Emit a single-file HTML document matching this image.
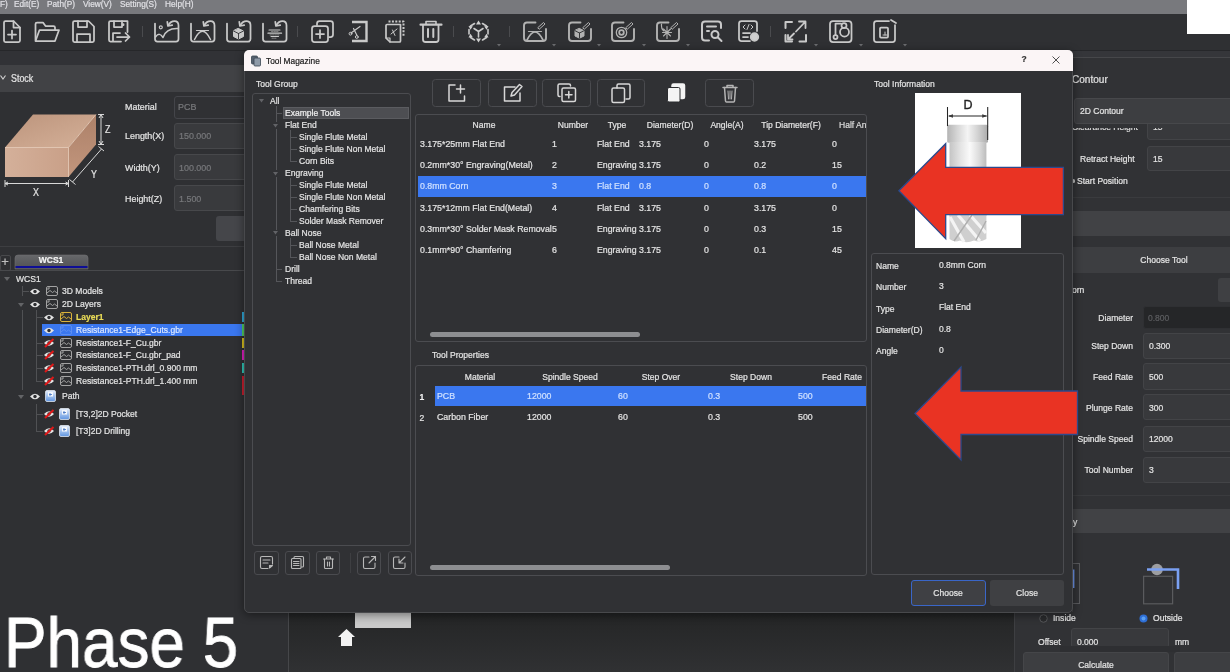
<!DOCTYPE html>
<html><head><meta charset="utf-8"><title>Tool Magazine</title>
<style>
html,body{margin:0;padding:0;}
body{width:1230px;height:672px;overflow:hidden;background:#2d2e31;font-family:"Liberation Sans",sans-serif;position:relative;}
#app{position:absolute;left:0;top:0;width:1230px;height:672px;overflow:visible;will-change:transform;filter:blur(0.45px);}
.b{position:absolute;}
.t{position:absolute;white-space:nowrap;-webkit-text-stroke:0.22px currentColor;}
svg{overflow:visible;}
</style></head><body><div id="app">
<div class="b" style="left:-5.0px;top:-5.0px;width:1240.0px;height:682.0px;background:#2f3033;"></div>
<div class="b" style="left:289px;top:50px;width:726px;height:622px;background:linear-gradient(#1f2021 0%,#222324 90.5%,#262728 92%,#303133 100%)"></div>
<div class="b" style="left:287.5px;top:50.0px;width:1.5px;height:622.0px;background:#46474a;"></div>
<div class="b" style="left:355.0px;top:612.0px;width:56.0px;height:16.0px;background:#c9c9c9;"></div>
<svg class="b" style="left:338.0px;top:629.0px;" width="17" height="18" viewBox="0 0 17 18"><path d="M8.5 0 L17 8 H14 V17 H3 V8 H0 Z" fill="#f2f2f2"/></svg>
<div class="b" style="left:-5.0px;top:-5.0px;width:1240.0px;height:18.5px;background:#78797d;"></div>
<div class="t" style="top:-3.0px;line-height:14px;font-size:9.3px;color:#e0e0e4;left:0.0px;transform:scaleX(0.89);transform-origin:0 50%;">F)</div>
<div class="t" style="top:-3.0px;line-height:14px;font-size:9.3px;color:#e0e0e4;left:14.4px;transform:scaleX(0.89);transform-origin:0 50%;">Edit(E)</div>
<div class="t" style="top:-3.0px;line-height:14px;font-size:9.3px;color:#e0e0e4;left:46.8px;transform:scaleX(0.89);transform-origin:0 50%;">Path(P)</div>
<div class="t" style="top:-3.0px;line-height:14px;font-size:9.3px;color:#e0e0e4;left:82.8px;transform:scaleX(0.89);transform-origin:0 50%;">View(V)</div>
<div class="t" style="top:-3.0px;line-height:14px;font-size:9.3px;color:#e0e0e4;left:119.7px;transform:scaleX(0.89);transform-origin:0 50%;">Setting(S)</div>
<div class="t" style="top:-3.0px;line-height:14px;font-size:9.3px;color:#e0e0e4;left:165.0px;transform:scaleX(0.89);transform-origin:0 50%;">Help(H)</div>
<div class="b" style="left:1187.0px;top:-5.0px;width:48.0px;height:38.5px;background:#ffffff;"></div>
<div class="b" style="left:0.0px;top:13.5px;width:1187.0px;height:37.0px;background:#2f3033;"></div>
<div class="b" style="left:1187.0px;top:33.5px;width:43.0px;height:17.0px;background:#2f3033;"></div>
<div class="b" style="left:0.0px;top:49.5px;width:1230.0px;height:1.2px;background:#26272a;"></div>
<svg class="b" style="left:2.5px;top:20.0px;" width="18" height="23" viewBox="0 0 18 23"><g fill="none" stroke="#c9c9c9" stroke-width="1.75" stroke-linecap="round" stroke-linejoin="round"><path d="M2.5 1 H10.5 L17 7.5 V20.5 Q17 22 15.5 22 H2.5 Q1 22 1 20.5 V2.5 Q1 1 2.5 1 Z"/><path d="M10.5 1 V7.5 H17"/><path d="M9 10.5 V18.5 M5 14.5 H13"/></g></svg>
<svg class="b" style="left:34.0px;top:20.0px;" width="26" height="23" viewBox="0 0 26 23"><g fill="none" stroke="#c9c9c9" stroke-width="1.75" stroke-linecap="round" stroke-linejoin="round"><path d="M1.5 20 V4 Q1.5 2.5 3 2.5 H9 L11.5 6 H19.5 Q21 6 21 7.5 V10"/><path d="M1.5 21 L5.5 10 H25 L21 21 Z"/></g></svg>
<svg class="b" style="left:72.0px;top:20.0px;" width="23" height="23" viewBox="0 0 23 23"><g fill="none" stroke="#c9c9c9" stroke-width="1.75" stroke-linecap="round" stroke-linejoin="round"><path d="M2.5 1 H16.5 L22 6.5 V20.5 Q22 22 20.5 22 H2.5 Q1 22 1 20.5 V2.5 Q1 1 2.5 1 Z"/><path d="M6 1 V7 H15 V1"/><path d="M5 22 V14 H18 V22"/></g></svg>
<svg class="b" style="left:108.0px;top:20.0px;" width="23" height="23" viewBox="0 0 23 23"><g fill="none" stroke="#c9c9c9" stroke-width="1.75" stroke-linecap="round" stroke-linejoin="round"><path d="M13 21.5 H2.5 Q1 21.5 1 20 V2.5 Q1 1 2.5 1 H19.5 V12"/><path d="M6 1 V7 H14 V1 M15.5 4 V5"/><path d="M5 21 V13 H12"/><path d="M9 17 H21.5 M17.5 13 L21.5 17 L17.5 21"/></g></svg>
<div class="b" style="left:141.5px;top:26.0px;width:1.0px;height:11.0px;background:#4a4b4e;"></div>
<svg class="b" style="left:154.0px;top:20.0px;" width="26" height="23" viewBox="0 0 26 23"><g fill="none" stroke="#c9c9c9" stroke-width="1.75" stroke-linecap="round" stroke-linejoin="round"><path d="M1 3.500 V19 Q1 21.500 3.500 21.500 H22 Q24.500 21.500 24.500 19 V5.500 Q24.500 1 20.500 1 Q16.500 1 14.500 5"/><path d="M13.300 1.800 L13.900 6 L18.200 5.200"/><path d="M1.500 17 Q5.500 11.500 9 17.500 Q12 8 24 8.500" stroke-width="1.5"/><circle cx="6.800" cy="7.300" r="1.500" stroke-width="1.2"/></g></svg>
<svg class="b" style="left:190.0px;top:20.0px;" width="26" height="23" viewBox="0 0 26 23"><g fill="none" stroke="#c9c9c9" stroke-width="1.75" stroke-linecap="round" stroke-linejoin="round"><path d="M1 3.500 V19 Q1 21.500 3.500 21.500 H22 Q24.500 21.500 24.500 19 V5.500 Q24.500 1 20.500 1 Q16.500 1 14.500 5"/><path d="M13.300 1.800 L13.900 6 L18.200 5.200"/><path d="M4.500 19.500 Q12.500 3 20.500 19.500" stroke-width="1.5"/><path d="M6.500 10.500 H18.500" stroke-width="1.2"/></g></svg>
<svg class="b" style="left:226.0px;top:20.0px;" width="26" height="23" viewBox="0 0 26 23"><g fill="none" stroke="#c9c9c9" stroke-width="1.75" stroke-linecap="round" stroke-linejoin="round"><path d="M1 3.500 V19 Q1 21.500 3.500 21.500 H22 Q24.500 21.500 24.500 19 V5.500 Q24.500 1 20.500 1 Q16.500 1 14.500 5"/><path d="M13.300 1.800 L13.900 6 L18.200 5.200"/><path d="M12.500 8.500 L17.500 11 V16.500 L12.500 19 L7.500 16.500 V11 Z" fill="#c9c9c9" stroke-width="1"/><path d="M7.500 11 L12.500 13.500 L17.500 11 M12.500 13.500 V19" stroke="#2f3033" stroke-width="0.900"/></g></svg>
<svg class="b" style="left:262.0px;top:20.0px;" width="26" height="23" viewBox="0 0 26 23"><g fill="none" stroke="#c9c9c9" stroke-width="1.75" stroke-linecap="round" stroke-linejoin="round"><path d="M1 3.500 V19 Q1 21.500 3.500 21.500 H22 Q24.500 21.500 24.500 19 V5.500 Q24.500 1 20.500 1 Q16.500 1 14.500 5"/><path d="M13.300 1.800 L13.900 6 L18.200 5.200"/><path d="M7 10 H18 M9 16.500 H16.500" stroke-width="1.100"/><path d="M6 13.200 H19.500" stroke-width="1.300"/><path d="M9.500 11.600 H16 M8 14.900 H17.500 M10 18.200 H15" stroke-width="0.800" stroke-dasharray="1.500 1" stroke="#9a9a9a"/></g></svg>
<div class="b" style="left:297.0px;top:26.0px;width:1.0px;height:11.0px;background:#4a4b4e;"></div>
<svg class="b" style="left:310.5px;top:20.0px;" width="23" height="23" viewBox="0 0 23 23"><g fill="none" stroke="#c9c9c9" stroke-width="1.75" stroke-linecap="round" stroke-linejoin="round"><path d="M6 5 V3.500 Q6 1 8.500 1 H19.500 Q22 1 22 3.500 V14.500 Q22 17 19.500 17 H18"/><rect x="1" y="6" width="16" height="16" rx="2.5"/><path d="M9 10 V18 M5 14 H13"/></g></svg>
<svg class="b" style="left:348.0px;top:20.0px;" width="20" height="23" viewBox="0 0 20 23"><g fill="none" stroke="#c9c9c9" stroke-width="1.75" stroke-linecap="round" stroke-linejoin="round"><path d="M4 2 H18.500 V21 H4" stroke-width="2.400" stroke-linejoin="miter" stroke-linecap="butt"/><path d="M3 13 L12 6.500 M5.500 8.500 L9 15.500" stroke-width="1.2"/><circle cx="2.500" cy="13.700" r="1.400" stroke-width="1"/><circle cx="8.800" cy="17" r="1.400" stroke-width="1"/></g></svg>
<svg class="b" style="left:385.0px;top:20.0px;" width="20" height="23" viewBox="0 0 20 23"><g fill="none" stroke="#c9c9c9" stroke-width="1.75" stroke-linecap="round" stroke-linejoin="round"><path d="M3.500 1.500 H18.500 V17" stroke-dasharray="2 1.400" stroke-width="2" stroke-linecap="butt"/><path d="M15.500 4.500 V21 Q15.500 22 14.500 22 H5 L1 18 V5.500 Q1 4.500 2 4.500 Z" stroke-width="1.700"/><path d="M1 18 H5 V22" stroke-width="1.2"/><path d="M6 14 L12 9 M7.500 10 L10 15.500" stroke-width="1"/></g></svg>
<svg class="b" style="left:419.5px;top:20.0px;" width="22" height="23" viewBox="0 0 22 23"><g fill="none" stroke="#c9c9c9" stroke-width="1.75" stroke-linecap="round" stroke-linejoin="round"><path d="M0.500 4.700 H21.500" stroke-width="2.200"/><path d="M6 4 V1.500 H16 V4" stroke-width="1.600"/><path d="M3 5 V19.500 Q3 22 5.500 22 H16 Q18.500 22 18.500 19.500 V5" stroke-width="1.800"/><path d="M8 9 V17 M13.300 9 V17" stroke-width="2"/></g></svg>
<div class="b" style="left:452.5px;top:26.0px;width:1.0px;height:11.0px;background:#4a4b4e;"></div>
<svg class="b" style="left:468.0px;top:20.0px;" width="21" height="23" viewBox="0 0 21 23"><g fill="none" stroke="#c9c9c9" stroke-width="1.75" stroke-linecap="round" stroke-linejoin="round"><path d="M10.500 11.500 V17 M10.500 11.500 L6 8.500 M10.500 11.500 L15 8.500" stroke-width="1.600"/><path d="M6.500 3.500 L2.500 6 M14.500 3.500 L18.500 6 M1 9.500 V14 M20 9.500 V14 M2.500 17.500 L6.500 20 M18.500 17.500 L14.500 20" stroke-width="1.600"/><path d="M10.500 0.500 L13 4.500 H8 Z M10.500 22.500 L13 18.500 H8 Z M0.500 6 L4.800 6.200 L2.500 9.800 Z M20.500 6 L16.200 6.200 L18.500 9.800 Z M0.500 17.500 L4.800 17.300 L2.500 13.700 Z M20.500 17.500 L16.200 17.300 L18.500 13.700 Z" fill="#cfcfcf" stroke="none"/></g></svg>
<svg class="b" style="left:496.7px;top:44.3px;" width="4" height="2.5" viewBox="0 0 4 2.5"><path d="M0 0 H4 L2 2.500 Z" fill="#6c6d70"/></svg>
<div class="b" style="left:509.0px;top:26.0px;width:1.0px;height:11.0px;background:#4a4b4e;"></div>
<svg class="b" style="left:522.6px;top:20.0px;" width="24" height="23" viewBox="0 0 24 23"><g fill="none" stroke="#b2b2b2" stroke-width="1.75" stroke-linecap="round" stroke-linejoin="round"><path d="M12.500 2.500 H4 Q1 2.500 1 5.500 V18 Q1 21 4 21 H20 Q23 21 23 18 V9" stroke-width="1.900"/><path d="M15 7.500 L20.500 2.500 L22 4 L16.500 9 Z" stroke-width="1"/><path d="M4 20 Q12 4 20 20" stroke-width="1.700"/><path d="M5.500 11.500 H18.500" stroke-width="1.200"/></g></svg>
<svg class="b" style="left:552.0px;top:44.3px;" width="4" height="2.5" viewBox="0 0 4 2.5"><path d="M0 0 H4 L2 2.500 Z" fill="#6c6d70"/></svg>
<svg class="b" style="left:567.6px;top:20.0px;" width="24" height="23" viewBox="0 0 24 23"><g fill="none" stroke="#b2b2b2" stroke-width="1.75" stroke-linecap="round" stroke-linejoin="round"><path d="M12.500 2.500 H4 Q1 2.500 1 5.500 V18 Q1 21 4 21 H20 Q23 21 23 18 V9" stroke-width="1.900"/><path d="M15 7.500 L20.500 2.500 L22 4 L16.500 9 Z" stroke-width="1"/><path d="M11.500 8.500 L16 10.700 V16 L11.500 18.200 L7 16 V10.700 Z" fill="#b2b2b2" stroke-width="1"/><path d="M7 10.700 L11.500 13 L16 10.700 M11.500 13 V18.200" stroke="#2a2b2e" stroke-width="0.900"/></g></svg>
<svg class="b" style="left:596.7px;top:44.3px;" width="4" height="2.5" viewBox="0 0 4 2.5"><path d="M0 0 H4 L2 2.500 Z" fill="#6c6d70"/></svg>
<svg class="b" style="left:610.8px;top:20.0px;" width="24" height="23" viewBox="0 0 24 23"><g fill="none" stroke="#b2b2b2" stroke-width="1.75" stroke-linecap="round" stroke-linejoin="round"><path d="M12.500 2.500 H4 Q1 2.500 1 5.500 V18 Q1 21 4 21 H20 Q23 21 23 18 V9" stroke-width="1.900"/><path d="M15 7.500 L20.500 2.500 L22 4 L16.500 9 Z" stroke-width="1"/><circle cx="10.500" cy="12.500" r="5.200" stroke-width="1.300"/><circle cx="10.500" cy="12.500" r="2.300" stroke-width="1.800"/></g></svg>
<svg class="b" style="left:641.5px;top:44.3px;" width="4" height="2.5" viewBox="0 0 4 2.5"><path d="M0 0 H4 L2 2.500 Z" fill="#6c6d70"/></svg>
<svg class="b" style="left:655.8px;top:20.0px;" width="24" height="23" viewBox="0 0 24 23"><g fill="none" stroke="#b2b2b2" stroke-width="1.75" stroke-linecap="round" stroke-linejoin="round"><path d="M12.500 2.500 H4 Q1 2.500 1 5.500 V18 Q1 21 4 21 H20 Q23 21 23 18 V9" stroke-width="1.900"/><path d="M15 7.500 L20.500 2.500 L22 4 L16.500 9 Z" stroke-width="1"/><path d="M5.500 4 Q5 9 8 11" stroke-width="1.200"/><path d="M11 6.500 V18.500 M6.500 12.500 H15.500 M7.500 9 L14.500 16 M14.500 9 L7.500 16" stroke-width="1.100"/></g></svg>
<svg class="b" style="left:686.0px;top:44.3px;" width="4" height="2.5" viewBox="0 0 4 2.5"><path d="M0 0 H4 L2 2.500 Z" fill="#6c6d70"/></svg>
<svg class="b" style="left:700.8px;top:20.0px;" width="22" height="23" viewBox="0 0 22 23"><g fill="none" stroke="#c9c9c9" stroke-width="1.75" stroke-linecap="round" stroke-linejoin="round"><path d="M8 20.500 H4 Q1 20.500 1 17.500 V4.500 Q1 1.500 4 1.500 H17 Q20 1.500 20 4.500 V8" stroke-width="2"/><path d="M6 6.500 H15 M6 11 H8" stroke-width="2"/><circle cx="14" cy="14.500" r="3.500" stroke-width="2"/><path d="M17 17.500 L20.500 21" stroke-width="2"/></g></svg>
<svg class="b" style="left:737.5px;top:20.0px;" width="21" height="23" viewBox="0 0 21 23"><g fill="none" stroke="#c9c9c9" stroke-width="1.75" stroke-linecap="round" stroke-linejoin="round"><path d="M12 21 H3.500 Q1 21 1 18.500 V3.500 Q1 1 3.500 1 H16.500 Q19 1 19 3.500 V11"/><path d="M7 5 L5 7 L7 9 M13 5 L15 7 L13 9 M11 4.500 L9 9.500" stroke-width="1"/><path d="M5 13 H12 M5 17 H10"/><circle cx="16.500" cy="17" r="3.800" fill="#cfcfcf"/></g></svg>
<div class="b" style="left:769.5px;top:26.0px;width:1.0px;height:11.0px;background:#4a4b4e;"></div>
<svg class="b" style="left:784.0px;top:20.0px;" width="23" height="23" viewBox="0 0 23 23"><g fill="none" stroke="#c9c9c9" stroke-width="1.75" stroke-linecap="round" stroke-linejoin="round"><path d="M1.500 8 V2 H8 M1.500 15 V21.500 H8 M22 15 V21.500 H15.500" stroke-width="2"/><path d="M12 11.500 L21.500 1.500 M15 1.500 H21.500 V8" stroke-width="1.8"/><path d="M10 13.500 L4 19.500 M4 15 V19.500 H8.500" stroke-width="1.8"/></g></svg>
<svg class="b" style="left:814.0px;top:44.3px;" width="4" height="2.5" viewBox="0 0 4 2.5"><path d="M0 0 H4 L2 2.500 Z" fill="#6c6d70"/></svg>
<svg class="b" style="left:828.6px;top:20.0px;" width="23" height="23" viewBox="0 0 23 23"><g fill="none" stroke="#c9c9c9" stroke-width="1.75" stroke-linecap="round" stroke-linejoin="round"><rect x="1" y="1" width="21.500" height="21" rx="3"/><circle cx="6.500" cy="17" r="2"/><circle cx="15.500" cy="12" r="4.500"/><circle cx="15" cy="5.500" r="2.500"/><path d="M6.500 15 V3.500 H12"/></g></svg>
<svg class="b" style="left:858.8px;top:44.3px;" width="4" height="2.5" viewBox="0 0 4 2.5"><path d="M0 0 H4 L2 2.500 Z" fill="#6c6d70"/></svg>
<svg class="b" style="left:873.0px;top:20.0px;" width="23" height="23" viewBox="0 0 23 23"><g fill="none" stroke="#c9c9c9" stroke-width="1.75" stroke-linecap="round" stroke-linejoin="round"><path d="M16 1 H3.500 Q1 1 1 3.500 V19.500 Q1 22 3.500 22 H19.500 Q22 22 22 19.500 V5"/><path d="M18 0 L23 3"/><rect x="7" y="7.500" width="8" height="10" rx="1"/><path d="M12 12 V15 M10 15 H14" stroke-width="1"/></g></svg>
<svg class="b" style="left:903.0px;top:44.3px;" width="4" height="2.5" viewBox="0 0 4 2.5"><path d="M0 0 H4 L2 2.500 Z" fill="#6c6d70"/></svg>
<div class="b" style="left:0.0px;top:51.0px;width:288.0px;height:14.0px;background:#313236;"></div>
<div class="b" style="left:0.0px;top:65.0px;width:288.0px;height:26.5px;background:#414245;"></div>
<svg class="b" style="left:0.0px;top:75.0px;" width="6" height="5" viewBox="0 0 6 5"><path d="M0.5 0.5 L3 4 L5.5 0.500" fill="none" stroke="#d0d0d0" stroke-width="1.1"/></svg>
<div class="t" style="top:72.1px;line-height:14px;font-size:10px;color:#e4e4e4;left:11.0px;transform:scaleX(0.89);transform-origin:0 50%;">Stock</div>
<svg class="b" style="left:0.0px;top:105.0px;" width="125" height="100" viewBox="0 0 125 100">
<defs>
<linearGradient id="gt" x1="0" y1="0" x2="1" y2="1"><stop offset="0" stop-color="#bc947c"/><stop offset="1" stop-color="#d5b199"/></linearGradient>
<linearGradient id="gf" x1="0" y1="0" x2="1" y2="0"><stop offset="0" stop-color="#d4b09a"/><stop offset="1" stop-color="#c9a088"/></linearGradient>
<linearGradient id="gr" x1="0" y1="0" x2="0" y2="1"><stop offset="0" stop-color="#ad8169"/><stop offset="1" stop-color="#c2967d"/></linearGradient>
</defs>
<polygon points="33,9.5 96,9.5 68.500,42.500 5,42.500" fill="url(#gt)"/>
<polygon points="5,42.500 68.500,42.500 68.500,72 5,72" fill="url(#gf)"/>
<polygon points="68.500,42.500 96,9.5 96,39.500 68.500,72" fill="url(#gr)"/>
<path d="M5 42.500 H68.500 V72 M68.500 42.500 L96 9.5" fill="none" stroke="#f0d4c0" stroke-width="0.8"/>
<g stroke="#d8d8d8" stroke-width="1" fill="none">
<path d="M101 9.5 V39.500 M98 9.5 H104 M98 39.500 H104 M99 13 L101 9.5 L103 13 M99 36 L101 39.500 L103 36"/>
<path d="M101.500 44 L72.500 77 M98.500 41.500 L104 46 M69.500 74.500 L75.500 79.500"/>
<path d="M5 78.500 H68.500 M5 75 V82 M68.500 75 V82 M8 77 L5 78.500 L8 80 M65.500 77 L68.500 78.500 L65.500 80"/>
</g></svg>
<div class="t" style="top:122.5px;line-height:14px;font-size:10px;color:#e4e4e4;left:104.5px;transform:scaleX(0.89);transform-origin:0 50%;">Z</div>
<div class="t" style="top:168.0px;line-height:14px;font-size:10px;color:#e4e4e4;left:90.5px;transform:scaleX(0.89);transform-origin:0 50%;">Y</div>
<div class="t" style="top:186.2px;line-height:14px;font-size:10px;color:#e4e4e4;left:33.3px;transform:scaleX(0.89);transform-origin:0 50%;">X</div>
<div class="t" style="top:100.3px;line-height:14px;font-size:9.6px;color:#e4e4e4;left:124.6px;transform:scaleX(0.93);transform-origin:0 50%;">Material</div>
<div class="b" style="left:174.0px;top:96.0px;width:120.0px;height:22.7px;background:#303134;border:1px solid #44454a;box-sizing:border-box;border-radius:3px;"></div>
<div class="t" style="top:100.3px;line-height:14px;font-size:9.6px;color:#77787b;left:178.0px;transform:scaleX(0.93);transform-origin:0 50%;">PCB</div>
<div class="t" style="top:129.0px;line-height:14px;font-size:9.6px;color:#e4e4e4;left:124.6px;transform:scaleX(0.93);transform-origin:0 50%;">Length(X)</div>
<div class="b" style="left:174.0px;top:123.0px;width:120.0px;height:25.6px;background:#393a3d;border:1px solid #47484b;box-sizing:border-box;border-radius:3px;"></div>
<div class="t" style="top:129.0px;line-height:14px;font-size:9.6px;color:#77787b;left:179.3px;transform:scaleX(0.93);transform-origin:0 50%;">150.000</div>
<div class="t" style="top:160.6px;line-height:14px;font-size:9.6px;color:#e4e4e4;left:124.6px;transform:scaleX(0.93);transform-origin:0 50%;">Width(Y)</div>
<div class="b" style="left:174.0px;top:154.0px;width:120.0px;height:26.0px;background:#393a3d;border:1px solid #47484b;box-sizing:border-box;border-radius:3px;"></div>
<div class="t" style="top:160.6px;line-height:14px;font-size:9.6px;color:#77787b;left:179.3px;transform:scaleX(0.93);transform-origin:0 50%;">100.000</div>
<div class="t" style="top:191.5px;line-height:14px;font-size:9.6px;color:#e4e4e4;left:124.6px;transform:scaleX(0.93);transform-origin:0 50%;">Height(Z)</div>
<div class="b" style="left:174.0px;top:184.8px;width:120.0px;height:26.6px;background:#393a3d;border:1px solid #47484b;box-sizing:border-box;border-radius:3px;"></div>
<div class="t" style="top:191.5px;line-height:14px;font-size:9.6px;color:#77787b;left:179.3px;transform:scaleX(0.93);transform-origin:0 50%;">1.500</div>
<div class="b" style="left:216.4px;top:216.0px;width:80.0px;height:24.6px;background:#45464a;border-radius:3px;"></div>
<div class="b" style="left:0.0px;top:246.0px;width:288.0px;height:1.0px;background:#3d3e41;"></div>
<div class="b" style="left:0.0px;top:254.5px;width:10.5px;height:16.0px;background:#2e2f32;border:1px solid #48494c;box-sizing:border-box;border-radius:2px;"></div>
<div class="t" style="top:255.3px;line-height:14px;font-size:13px;color:#bdbdbd;left:-145.0px;width:300px;text-align:center;transform:scaleX(1);transform-origin:50% 50%;">+</div>
<svg class="b" style="left:15.0px;top:254.5px;" width="73" height="14" viewBox="0 0 73 14"><defs><linearGradient id="tg" x1="0" y1="0" x2="0" y2="1"><stop offset="0" stop-color="#66676a"/><stop offset="1" stop-color="#505154"/></linearGradient></defs>
<path d="M0 14 V3 Q0 0 3 0 H70 Q73 0 73 3 V14 Z" fill="url(#tg)" stroke="#707174" stroke-width="0.6"/><rect x="0.5" y="11" width="72" height="2" fill="#0e0e96"/></svg>
<div class="t" style="top:253.0px;line-height:14px;font-size:9.6px;color:#f4f4f4;font-weight:bold;left:-99.0px;width:300px;text-align:center;transform:scaleX(0.89);transform-origin:50% 50%;">WCS1</div>
<div class="b" style="left:0.0px;top:270.0px;width:244.0px;height:1.0px;background:#48494c;"></div>
<div class="b" style="left:21.5px;top:286.0px;width:1.0px;height:10.0px;background:#505154;"></div>
<div class="b" style="left:21.5px;top:291.0px;width:7.0px;height:1.0px;background:#505154;"></div>
<div class="b" style="left:21.5px;top:310.0px;width:1.0px;height:80.0px;background:#505154;"></div>
<div class="b" style="left:35.5px;top:310.0px;width:1.0px;height:71.0px;background:#505154;"></div>
<div class="b" style="left:35.5px;top:317.0px;width:7.0px;height:1.0px;background:#505154;"></div>
<div class="b" style="left:35.5px;top:342.8px;width:7.0px;height:1.0px;background:#505154;"></div>
<div class="b" style="left:35.5px;top:355.4px;width:7.0px;height:1.0px;background:#505154;"></div>
<div class="b" style="left:35.5px;top:368.0px;width:7.0px;height:1.0px;background:#505154;"></div>
<div class="b" style="left:35.5px;top:380.8px;width:7.0px;height:1.0px;background:#505154;"></div>
<div class="b" style="left:35.5px;top:404.0px;width:1.0px;height:27.5px;background:#505154;"></div>
<div class="b" style="left:35.5px;top:413.7px;width:7.0px;height:1.0px;background:#505154;"></div>
<div class="b" style="left:35.5px;top:431.4px;width:7.0px;height:1.0px;background:#505154;"></div>
<svg class="b" style="left:3.5px;top:277.2px;" width="6" height="4" viewBox="0 0 6 4"><path d="M0 0 H6 L3 4 Z" fill="#636467"/></svg>
<div class="t" style="top:271.7px;line-height:14px;font-size:9.6px;color:#e4e4e4;left:15.5px;transform:scaleX(0.89);transform-origin:0 50%;">WCS1</div>
<svg class="b" style="left:30.0px;top:287.5px;" width="10" height="7" viewBox="0 0 10 7"><path d="M0 3.500 Q5 -2 10 3.500 Q5 9 0 3.500 Z" fill="#e4e4e4"/><circle cx="5" cy="3.500" r="1.7" fill="#2e2f32"/></svg>
<svg class="b" style="left:45.5px;top:286.0px;" width="12" height="10" viewBox="0 0 12 10"><g fill="none" stroke="#a2a2a2" stroke-width="1"><rect x="0.5" y="0.500" width="11" height="9" rx="1.5"/><path d="M1 7 L4 4.500 L6.500 6.500 L8.500 5 L11 7"/><path d="M3 0.500 V3 H0.5"/></g></svg>
<div class="t" style="top:284.0px;line-height:14px;font-size:9.6px;color:#e4e4e4;left:61.5px;transform:scaleX(0.89);transform-origin:0 50%;">3D Models</div>
<svg class="b" style="left:18.0px;top:302.8px;" width="6" height="4" viewBox="0 0 6 4"><path d="M0 0 H6 L3 4 Z" fill="#636467"/></svg>
<svg class="b" style="left:30.0px;top:300.8px;" width="10" height="7" viewBox="0 0 10 7"><path d="M0 3.500 Q5 -2 10 3.500 Q5 9 0 3.500 Z" fill="#e4e4e4"/><circle cx="5" cy="3.500" r="1.7" fill="#2e2f32"/></svg>
<svg class="b" style="left:45.5px;top:299.3px;" width="12" height="10" viewBox="0 0 12 10"><g fill="none" stroke="#a2a2a2" stroke-width="1"><rect x="0.5" y="0.500" width="11" height="9" rx="1.5"/><path d="M1 7 L4 4.500 L6.500 6.500 L8.500 5 L11 7"/><path d="M3 0.500 V3 H0.5"/></g></svg>
<div class="t" style="top:297.3px;line-height:14px;font-size:9.6px;color:#e4e4e4;left:61.5px;transform:scaleX(0.89);transform-origin:0 50%;">2D Layers</div>
<svg class="b" style="left:44.0px;top:313.5px;" width="10" height="7" viewBox="0 0 10 7"><path d="M0 3.500 Q5 -2 10 3.500 Q5 9 0 3.500 Z" fill="#e4e4e4"/><circle cx="5" cy="3.500" r="1.7" fill="#2e2f32"/></svg>
<svg class="b" style="left:59.5px;top:312.0px;" width="12" height="10" viewBox="0 0 12 10"><g fill="none" stroke="#d9b23a" stroke-width="1"><rect x="0.5" y="0.500" width="11" height="9" rx="1.5"/><path d="M1 7 L4 4.500 L6.500 6.500 L8.500 5 L11 7"/><path d="M3 0.500 V3 H0.5"/></g></svg>
<div class="t" style="top:310.0px;line-height:14px;font-size:9.6px;color:#eadc58;font-weight:bold;left:75.7px;transform:scaleX(0.89);transform-origin:0 50%;">Layer1</div>
<div class="b" style="left:42.0px;top:323.8px;width:202.0px;height:12.4px;background:#3a77ef;"></div>
<svg class="b" style="left:44.0px;top:326.5px;" width="10" height="7" viewBox="0 0 10 7"><path d="M0 3.500 Q5 -2 10 3.500 Q5 9 0 3.500 Z" fill="#e4e4e4"/><circle cx="5" cy="3.500" r="1.7" fill="#2e2f32"/></svg>
<svg class="b" style="left:59.5px;top:325.0px;" width="12" height="10" viewBox="0 0 12 10"><g fill="none" stroke="#5c8ef0" stroke-width="1"><rect x="0.5" y="0.500" width="11" height="9" rx="1.5"/><path d="M1 7 L4 4.500 L6.500 6.500 L8.500 5 L11 7"/><path d="M3 0.500 V3 H0.5"/></g></svg>
<div class="t" style="top:323.0px;line-height:14px;font-size:9.6px;color:#dbe7ff;left:75.7px;transform:scaleX(0.89);transform-origin:0 50%;">Resistance1-Edge_Cuts.gbr</div>
<svg class="b" style="left:43.5px;top:338.8px;" width="10" height="8" viewBox="0 0 10 8"><path d="M0 4 Q5 -1.500 10 4 Q5 9.5 0 4 Z" fill="#e4e4e4"/><circle cx="5" cy="4" r="1.7" fill="#2e2f32"/><path d="M1 8 L9.5 0" stroke="#e01818" stroke-width="2"/></svg>
<svg class="b" style="left:59.5px;top:337.8px;" width="12" height="10" viewBox="0 0 12 10"><g fill="none" stroke="#a2a2a2" stroke-width="1"><rect x="0.5" y="0.500" width="11" height="9" rx="1.5"/><path d="M1 7 L4 4.500 L6.500 6.500 L8.500 5 L11 7"/><path d="M3 0.500 V3 H0.5"/></g></svg>
<div class="t" style="top:335.8px;line-height:14px;font-size:9.6px;color:#e4e4e4;left:75.7px;transform:scaleX(0.89);transform-origin:0 50%;">Resistance1-F_Cu.gbr</div>
<svg class="b" style="left:43.5px;top:351.4px;" width="10" height="8" viewBox="0 0 10 8"><path d="M0 4 Q5 -1.500 10 4 Q5 9.5 0 4 Z" fill="#e4e4e4"/><circle cx="5" cy="4" r="1.7" fill="#2e2f32"/><path d="M1 8 L9.5 0" stroke="#e01818" stroke-width="2"/></svg>
<svg class="b" style="left:59.5px;top:350.4px;" width="12" height="10" viewBox="0 0 12 10"><g fill="none" stroke="#a2a2a2" stroke-width="1"><rect x="0.5" y="0.500" width="11" height="9" rx="1.5"/><path d="M1 7 L4 4.500 L6.500 6.500 L8.500 5 L11 7"/><path d="M3 0.500 V3 H0.5"/></g></svg>
<div class="t" style="top:348.4px;line-height:14px;font-size:9.6px;color:#e4e4e4;left:75.7px;transform:scaleX(0.89);transform-origin:0 50%;">Resistance1-F_Cu.gbr_pad</div>
<svg class="b" style="left:43.5px;top:364.0px;" width="10" height="8" viewBox="0 0 10 8"><path d="M0 4 Q5 -1.500 10 4 Q5 9.5 0 4 Z" fill="#e4e4e4"/><circle cx="5" cy="4" r="1.7" fill="#2e2f32"/><path d="M1 8 L9.5 0" stroke="#e01818" stroke-width="2"/></svg>
<svg class="b" style="left:59.5px;top:363.0px;" width="12" height="10" viewBox="0 0 12 10"><g fill="none" stroke="#a2a2a2" stroke-width="1"><rect x="0.5" y="0.500" width="11" height="9" rx="1.5"/><path d="M1 7 L4 4.500 L6.500 6.500 L8.500 5 L11 7"/><path d="M3 0.500 V3 H0.5"/></g></svg>
<div class="t" style="top:361.0px;line-height:14px;font-size:9.6px;color:#e4e4e4;left:75.7px;transform:scaleX(0.89);transform-origin:0 50%;">Resistance1-PTH.drl_0.900 mm</div>
<svg class="b" style="left:43.5px;top:376.8px;" width="10" height="8" viewBox="0 0 10 8"><path d="M0 4 Q5 -1.500 10 4 Q5 9.5 0 4 Z" fill="#e4e4e4"/><circle cx="5" cy="4" r="1.7" fill="#2e2f32"/><path d="M1 8 L9.5 0" stroke="#e01818" stroke-width="2"/></svg>
<svg class="b" style="left:59.5px;top:375.8px;" width="12" height="10" viewBox="0 0 12 10"><g fill="none" stroke="#a2a2a2" stroke-width="1"><rect x="0.5" y="0.500" width="11" height="9" rx="1.5"/><path d="M1 7 L4 4.500 L6.500 6.500 L8.500 5 L11 7"/><path d="M3 0.500 V3 H0.5"/></g></svg>
<div class="t" style="top:373.8px;line-height:14px;font-size:9.6px;color:#e4e4e4;left:75.7px;transform:scaleX(0.89);transform-origin:0 50%;">Resistance1-PTH.drl_1.400 mm</div>
<svg class="b" style="left:18.0px;top:394.5px;" width="6" height="4" viewBox="0 0 6 4"><path d="M0 0 H6 L3 4 Z" fill="#636467"/></svg>
<svg class="b" style="left:30.0px;top:392.5px;" width="10" height="7" viewBox="0 0 10 7"><path d="M0 3.500 Q5 -2 10 3.500 Q5 9 0 3.500 Z" fill="#e4e4e4"/><circle cx="5" cy="3.500" r="1.7" fill="#2e2f32"/></svg>
<svg class="b" style="left:45.0px;top:390.0px;" width="11" height="12" viewBox="0 0 11 12"><defs><linearGradient id="dg" x1="0" y1="0" x2="0" y2="1"><stop offset="0" stop-color="#e8f0fc"/><stop offset="1" stop-color="#5e94e0"/></linearGradient></defs><rect x="0.5" y="0.500" width="10" height="11" rx="1.5" fill="url(#dg)" stroke="#dfe6f0" stroke-width="0.8"/><rect x="3" y="2" width="5" height="4.500" fill="#f4f7fc"/><path d="M5 3 V6 M4 4.500 H7" stroke="#3b6fc0" stroke-width="0.8"/></svg>
<div class="t" style="top:389.0px;line-height:14px;font-size:9.6px;color:#e4e4e4;left:61.5px;transform:scaleX(0.89);transform-origin:0 50%;">Path</div>
<svg class="b" style="left:43.5px;top:409.7px;" width="10" height="8" viewBox="0 0 10 8"><path d="M0 4 Q5 -1.500 10 4 Q5 9.5 0 4 Z" fill="#e4e4e4"/><circle cx="5" cy="4" r="1.7" fill="#2e2f32"/><path d="M1 8 L9.5 0" stroke="#e01818" stroke-width="2"/></svg>
<svg class="b" style="left:59.0px;top:407.7px;" width="11" height="12" viewBox="0 0 11 12"><defs><linearGradient id="dg" x1="0" y1="0" x2="0" y2="1"><stop offset="0" stop-color="#e8f0fc"/><stop offset="1" stop-color="#5e94e0"/></linearGradient></defs><rect x="0.5" y="0.500" width="10" height="11" rx="1.5" fill="url(#dg)" stroke="#dfe6f0" stroke-width="0.8"/><rect x="3" y="2" width="5" height="4.500" fill="#f4f7fc"/><path d="M5 3 V6 M4 4.500 H7" stroke="#3b6fc0" stroke-width="0.8"/></svg>
<div class="t" style="top:406.7px;line-height:14px;font-size:9.6px;color:#e4e4e4;left:75.7px;transform:scaleX(0.89);transform-origin:0 50%;">[T3,2]2D Pocket</div>
<svg class="b" style="left:43.5px;top:427.4px;" width="10" height="8" viewBox="0 0 10 8"><path d="M0 4 Q5 -1.500 10 4 Q5 9.5 0 4 Z" fill="#e4e4e4"/><circle cx="5" cy="4" r="1.7" fill="#2e2f32"/><path d="M1 8 L9.5 0" stroke="#e01818" stroke-width="2"/></svg>
<svg class="b" style="left:59.0px;top:425.4px;" width="11" height="12" viewBox="0 0 11 12"><defs><linearGradient id="dg" x1="0" y1="0" x2="0" y2="1"><stop offset="0" stop-color="#e8f0fc"/><stop offset="1" stop-color="#5e94e0"/></linearGradient></defs><rect x="0.5" y="0.500" width="10" height="11" rx="1.5" fill="url(#dg)" stroke="#dfe6f0" stroke-width="0.8"/><rect x="3" y="2" width="5" height="4.500" fill="#f4f7fc"/><path d="M5 3 V6 M4 4.500 H7" stroke="#3b6fc0" stroke-width="0.8"/></svg>
<div class="t" style="top:424.4px;line-height:14px;font-size:9.6px;color:#e4e4e4;left:75.7px;transform:scaleX(0.89);transform-origin:0 50%;">[T3]2D Drilling</div>
<div class="b" style="left:242.2px;top:312.0px;width:2.6px;height:10.0px;background:#2fa8d8;"></div>
<div class="b" style="left:242.2px;top:324.0px;width:2.6px;height:12.0px;background:#4fd060;"></div>
<div class="b" style="left:242.2px;top:338.0px;width:2.6px;height:10.0px;background:#d8c020;"></div>
<div class="b" style="left:242.2px;top:350.0px;width:2.6px;height:10.0px;background:#e020c0;"></div>
<div class="b" style="left:242.2px;top:363.0px;width:2.6px;height:10.0px;background:#30c8b8;"></div>
<div class="b" style="left:242.2px;top:376.0px;width:2.6px;height:19.0px;background:#c82030;"></div>
<div class="t" style="top:633.0px;line-height:14px;font-size:70.5px;color:#ffffff;left:4.0px;transform:scaleX(0.905);transform-origin:0 50%;line-height:80px;top:603px;-webkit-text-stroke:0.8px #fff;">Phase 5</div>
<div class="b" style="left:1015.0px;top:51.0px;width:215.0px;height:621.0px;background:#313235;"></div>
<div class="b" style="left:1072.0px;top:51.0px;width:158.0px;height:6.5px;background:#35363a;"></div>
<div class="b" style="left:1072.0px;top:57.0px;width:158.0px;height:1.0px;background:#46474a;"></div>
<div class="b" style="left:1014.0px;top:51.0px;width:1.0px;height:621.0px;background:#3e3f42;"></div>
<div class="b" style="left:1072.3px;top:71.0px;width:1.0px;height:541.0px;background:#3f4043;"></div>
<div class="t" style="top:72.3px;line-height:14px;font-size:11.3px;color:#e2e2e2;left:1072.2px;transform:scaleX(0.89);transform-origin:0 50%;">Contour</div>
<div class="b" style="left:1146.6px;top:113.0px;width:100.0px;height:26.8px;background:#38393c;border:1px solid #434447;box-sizing:border-box;border-radius:3px;"></div>
<div class="b" style="left:1074.3px;top:97.5px;width:170.0px;height:26.3px;background:#3d3e41;border:1px solid #47484b;box-sizing:border-box;border-radius:3px;"></div>
<div class="t" style="top:104.0px;line-height:14px;font-size:9.6px;color:#e4e4e4;left:1080.2px;transform:scaleX(0.89);transform-origin:0 50%;">2D Contour</div>
<div class="b" style="left:1072px;top:127.800px;width:158px;height:15px;overflow:hidden">
<div class="t" style="left:0px;top:-7.800px;line-height:14px;font-size:9.6px;color:#dedede;transform:scaleX(0.89);transform-origin:0 50%">Clearance Height</div>
<div class="t" style="left:81px;top:-7.800px;line-height:14px;font-size:9.6px;color:#dedede;transform:scaleX(0.89);transform-origin:0 50%">15</div>
</div>
<div class="t" style="top:152.0px;line-height:14px;font-size:9.6px;color:#e4e4e4;left:1080.0px;transform:scaleX(0.89);transform-origin:0 50%;">Retract Height</div>
<div class="b" style="left:1146.6px;top:145.7px;width:100.0px;height:25.5px;background:#38393c;border:1px solid #434447;box-sizing:border-box;border-radius:3px;"></div>
<div class="t" style="top:152.0px;line-height:14px;font-size:9.6px;color:#e4e4e4;left:1152.8px;transform:scaleX(0.89);transform-origin:0 50%;">15</div>
<div class="b" style="left:1071.5px;top:179.0px;width:3.0px;height:4.0px;background:#bdbdbd;border-radius:2px;"></div>
<div class="t" style="top:174.4px;line-height:14px;font-size:9.6px;color:#e4e4e4;left:1077.0px;transform:scaleX(0.89);transform-origin:0 50%;">Start Position</div>
<div class="b" style="left:1072.0px;top:196.5px;width:158.0px;height:1.0px;background:#3a3b3e;"></div>
<div class="b" style="left:1072.0px;top:211.4px;width:158.0px;height:24.6px;background:#414245;"></div>
<div class="b" style="left:1072.0px;top:247.4px;width:158.0px;height:25.5px;background:#3d3e41;"></div>
<div class="t" style="top:253.3px;line-height:14px;font-size:9.6px;color:#e4e4e4;left:1014.0px;width:300px;text-align:center;transform:scaleX(0.89);transform-origin:50% 50%;">Choose Tool</div>
<div class="t" style="top:283.3px;line-height:14px;font-size:9.6px;color:#e4e4e4;left:1072.0px;transform:scaleX(0.89);transform-origin:0 50%;">orn</div>
<div class="b" style="left:1217.7px;top:277.7px;width:20.0px;height:24.6px;background:#3f4043;border-radius:3px;"></div>
<div class="t" style="top:310.6px;line-height:14px;font-size:9.6px;color:#e4e4e4;left:833.3px;width:300px;text-align:right;transform:scaleX(0.89);transform-origin:100% 50%;">Diameter</div>
<div class="b" style="left:1143.2px;top:306.4px;width:100.0px;height:22.6px;background:#252628;border:1px solid #2f3033;box-sizing:border-box;border-radius:3px;"></div>
<div class="t" style="top:310.6px;line-height:14px;font-size:9.6px;color:#5d5e61;left:1147.5px;transform:scaleX(0.89);transform-origin:0 50%;">0.800</div>
<div class="t" style="top:339.0px;line-height:14px;font-size:9.6px;color:#e4e4e4;left:833.3px;width:300px;text-align:right;transform:scaleX(0.89);transform-origin:100% 50%;">Step Down</div>
<div class="b" style="left:1143.2px;top:332.6px;width:100.0px;height:26.0px;background:#38393c;border:1px solid #434447;box-sizing:border-box;border-radius:3px;"></div>
<div class="t" style="top:339.0px;line-height:14px;font-size:9.6px;color:#e4e4e4;left:1148.8px;transform:scaleX(0.89);transform-origin:0 50%;">0.300</div>
<div class="t" style="top:369.8px;line-height:14px;font-size:9.6px;color:#e4e4e4;left:833.3px;width:300px;text-align:right;transform:scaleX(0.89);transform-origin:100% 50%;">Feed Rate</div>
<div class="b" style="left:1143.2px;top:363.4px;width:100.0px;height:26.6px;background:#38393c;border:1px solid #434447;box-sizing:border-box;border-radius:3px;"></div>
<div class="t" style="top:369.8px;line-height:14px;font-size:9.6px;color:#e4e4e4;left:1148.8px;transform:scaleX(0.89);transform-origin:0 50%;">500</div>
<div class="t" style="top:401.0px;line-height:14px;font-size:9.6px;color:#e4e4e4;left:833.3px;width:300px;text-align:right;transform:scaleX(0.89);transform-origin:100% 50%;">Plunge Rate</div>
<div class="b" style="left:1143.2px;top:394.0px;width:100.0px;height:26.0px;background:#38393c;border:1px solid #434447;box-sizing:border-box;border-radius:3px;"></div>
<div class="t" style="top:401.0px;line-height:14px;font-size:9.6px;color:#e4e4e4;left:1148.8px;transform:scaleX(0.89);transform-origin:0 50%;">300</div>
<div class="t" style="top:432.4px;line-height:14px;font-size:9.6px;color:#e4e4e4;left:833.3px;width:300px;text-align:right;transform:scaleX(0.89);transform-origin:100% 50%;">Spindle Speed</div>
<div class="b" style="left:1143.2px;top:426.0px;width:100.0px;height:26.3px;background:#38393c;border:1px solid #434447;box-sizing:border-box;border-radius:3px;"></div>
<div class="t" style="top:432.4px;line-height:14px;font-size:9.6px;color:#e4e4e4;left:1148.8px;transform:scaleX(0.89);transform-origin:0 50%;">12000</div>
<div class="t" style="top:463.2px;line-height:14px;font-size:9.6px;color:#e4e4e4;left:833.3px;width:300px;text-align:right;transform:scaleX(0.89);transform-origin:100% 50%;">Tool Number</div>
<div class="b" style="left:1143.2px;top:456.8px;width:100.0px;height:26.2px;background:#38393c;border:1px solid #434447;box-sizing:border-box;border-radius:3px;"></div>
<div class="t" style="top:463.2px;line-height:14px;font-size:9.6px;color:#e4e4e4;left:1148.8px;transform:scaleX(0.89);transform-origin:0 50%;">3</div>
<div class="b" style="left:1072.0px;top:495.0px;width:158.0px;height:1.0px;background:#3a3b3e;"></div>
<div class="b" style="left:1072.0px;top:508.5px;width:158.0px;height:24.7px;background:#414245;"></div>
<div class="t" style="top:514.5px;line-height:14px;font-size:9.6px;color:#e4e4e4;left:1072.5px;transform:scaleX(0.89);transform-origin:0 50%;">y</div>
<svg class="b" style="left:1060.0px;top:560.0px;" width="30" height="48" viewBox="0 0 30 48"><rect x="2" y="3.500" width="17.500" height="40" fill="none" stroke="#5a5b5e" stroke-width="1"/><path d="M13.300 9.5 V28" stroke="#6f97ee" stroke-width="2.2"/></svg>
<svg class="b" style="left:1140.0px;top:560.0px;" width="45" height="48" viewBox="0 0 45 48"><rect x="3.600" y="16.300" width="29" height="27.500" fill="none" stroke="#5a5b5e" stroke-width="1.2"/><circle cx="17" cy="9.5" r="5.800" fill="#9d9ea1"/><path d="M7 9.5 H38 V29" fill="none" stroke="#7aa0f2" stroke-width="2.600"/></svg>
<svg class="b" style="left:1038.5px;top:613.7px;" width="9" height="9" viewBox="0 0 9 9"><circle cx="4.500" cy="4.500" r="3.800" fill="#2a2b2d" stroke="#57585b" stroke-width="1"/></svg>
<div class="t" style="top:611.2px;line-height:14px;font-size:9.6px;color:#e4e4e4;left:1052.6px;transform:scaleX(0.89);transform-origin:0 50%;">Inside</div>
<svg class="b" style="left:1139.0px;top:613.7px;" width="9" height="9" viewBox="0 0 9 9"><circle cx="4.500" cy="4.500" r="4" fill="#2f6fd6"/><circle cx="4.500" cy="4.500" r="2" fill="#5aa0f2"/></svg>
<div class="t" style="top:611.2px;line-height:14px;font-size:9.6px;color:#e4e4e4;left:1152.8px;transform:scaleX(0.89);transform-origin:0 50%;">Outside</div>
<div class="t" style="top:634.8px;line-height:14px;font-size:9.6px;color:#e4e4e4;left:1037.5px;transform:scaleX(0.89);transform-origin:0 50%;">Offset</div>
<div class="b" style="left:1071.0px;top:628.4px;width:97.7px;height:20.0px;background:#38393c;border:1px solid #434447;box-sizing:border-box;border-radius:3px;"></div>
<div class="b" style="left:1060.0px;top:646.3px;width:120.0px;height:6.2px;background:#2e2f32;"></div>
<div class="t" style="top:634.8px;line-height:14px;font-size:9.6px;color:#e4e4e4;left:1076.8px;transform:scaleX(0.89);transform-origin:0 50%;">0.000</div>
<div class="t" style="top:634.8px;line-height:14px;font-size:9.6px;color:#e4e4e4;left:1175.0px;transform:scaleX(0.89);transform-origin:0 50%;">mm</div>
<div class="b" style="left:1022.8px;top:652.4px;width:146.2px;height:30.0px;background:#3d3e41;border:1px solid #454649;box-sizing:border-box;border-radius:3px;"></div>
<div class="t" style="top:658.3px;line-height:14px;font-size:9.6px;color:#e4e4e4;left:945.5px;width:300px;text-align:center;transform:scaleX(0.89);transform-origin:50% 50%;">Calculate</div>
<div class="b" style="left:1174.0px;top:652.4px;width:70.0px;height:30.0px;background:#3d3e41;border:1px solid #454649;box-sizing:border-box;border-radius:3px;"></div>
<div class="b" style="left:244.4px;top:49.6px;width:828.4px;height:563.0px;background:#303134;border-radius:5px;box-shadow:0 2px 10px rgba(0,0,0,0.45);border:1px solid #48494c;box-sizing:border-box;"></div>
<div class="b" style="left:244.4px;top:49.6px;width:828.4px;height:21.2px;background:#fbf5f6;border-radius:5px 5px 0 0;"></div>
<svg class="b" style="left:250.5px;top:54.5px;" width="11" height="12" viewBox="0 0 11 12"><rect x="0.5" y="1" width="6" height="8" rx="1" fill="#56616f" stroke="#3a4552" stroke-width="0.8"/><rect x="3" y="3" width="6.500" height="8" rx="1" fill="#8f9aa8" stroke="#3a4552" stroke-width="0.8"/></svg>
<div class="t" style="top:53.5px;line-height:14px;font-size:9.4px;color:#1c1c1c;left:266.0px;transform:scaleX(0.89);transform-origin:0 50%;">Tool Magazine</div>
<div class="t" style="top:52.4px;line-height:14px;font-size:9.5px;color:#333;font-weight:bold;left:874.0px;width:300px;text-align:center;transform:scaleX(0.89);transform-origin:50% 50%;">?</div>
<svg class="b" style="left:1052.1px;top:55.8px;" width="8" height="8" viewBox="0 0 8 8"><path d="M0.5 0.500 L7.500 7.500 M7.500 0.500 L0.5 7.500" stroke="#3c3c3c" stroke-width="0.9"/></svg>
<div class="t" style="top:77.0px;line-height:14px;font-size:9.6px;color:#e4e4e4;left:255.5px;transform:scaleX(0.89);transform-origin:0 50%;">Tool Group</div>
<div class="b" style="left:252.2px;top:93.0px;width:158.8px;height:453.0px;border:1px solid #4b4c50;box-sizing:border-box;border-radius:3px;"></div>
<svg class="b" style="left:259.0px;top:99.0px;" width="5" height="3.5" viewBox="0 0 5 3.5"><path d="M0 0 H5 L2.500 3.500 Z" fill="#626367"/></svg>
<div class="t" style="top:93.5px;line-height:14px;font-size:9.6px;color:#e4e4e4;left:270.4px;transform:scaleX(0.89);transform-origin:0 50%;">All</div>
<div class="b" style="left:282.5px;top:106.8px;width:126.5px;height:12.0px;background:#4d4e52;border:1px solid #5b5c60;box-sizing:border-box;"></div>
<div class="t" style="top:105.8px;line-height:14px;font-size:9.6px;color:#f0f0f0;left:284.5px;transform:scaleX(0.89);transform-origin:0 50%;">Example Tools</div>
<div class="t" style="top:118.0px;line-height:14px;font-size:9.6px;color:#e4e4e4;left:284.8px;transform:scaleX(0.89);transform-origin:0 50%;">Flat End</div>
<div class="t" style="top:130.2px;line-height:14px;font-size:9.6px;color:#e4e4e4;left:299.0px;transform:scaleX(0.89);transform-origin:0 50%;">Single Flute Metal</div>
<div class="b" style="left:290.0px;top:137.2px;width:6.5px;height:1.0px;background:#55565a;"></div>
<div class="t" style="top:142.0px;line-height:14px;font-size:9.6px;color:#e4e4e4;left:299.0px;transform:scaleX(0.89);transform-origin:0 50%;">Single Flute Non Metal</div>
<div class="b" style="left:290.0px;top:149.0px;width:6.5px;height:1.0px;background:#55565a;"></div>
<div class="t" style="top:154.3px;line-height:14px;font-size:9.6px;color:#e4e4e4;left:299.0px;transform:scaleX(0.89);transform-origin:0 50%;">Corn Bits</div>
<div class="b" style="left:290.0px;top:161.3px;width:6.5px;height:1.0px;background:#55565a;"></div>
<div class="t" style="top:166.0px;line-height:14px;font-size:9.6px;color:#e4e4e4;left:284.8px;transform:scaleX(0.89);transform-origin:0 50%;">Engraving</div>
<div class="t" style="top:178.3px;line-height:14px;font-size:9.6px;color:#e4e4e4;left:299.0px;transform:scaleX(0.89);transform-origin:0 50%;">Single Flute Metal</div>
<div class="b" style="left:290.0px;top:185.3px;width:6.5px;height:1.0px;background:#55565a;"></div>
<div class="t" style="top:190.2px;line-height:14px;font-size:9.6px;color:#e4e4e4;left:299.0px;transform:scaleX(0.89);transform-origin:0 50%;">Single Flute Non Metal</div>
<div class="b" style="left:290.0px;top:197.2px;width:6.5px;height:1.0px;background:#55565a;"></div>
<div class="t" style="top:202.4px;line-height:14px;font-size:9.6px;color:#e4e4e4;left:299.0px;transform:scaleX(0.89);transform-origin:0 50%;">Chamfering Bits</div>
<div class="b" style="left:290.0px;top:209.4px;width:6.5px;height:1.0px;background:#55565a;"></div>
<div class="t" style="top:214.3px;line-height:14px;font-size:9.6px;color:#e4e4e4;left:299.0px;transform:scaleX(0.89);transform-origin:0 50%;">Solder Mask Remover</div>
<div class="b" style="left:290.0px;top:221.3px;width:6.5px;height:1.0px;background:#55565a;"></div>
<div class="t" style="top:225.7px;line-height:14px;font-size:9.6px;color:#e4e4e4;left:284.8px;transform:scaleX(0.89);transform-origin:0 50%;">Ball Nose</div>
<div class="t" style="top:237.8px;line-height:14px;font-size:9.6px;color:#e4e4e4;left:299.0px;transform:scaleX(0.89);transform-origin:0 50%;">Ball Nose Metal</div>
<div class="b" style="left:290.0px;top:244.8px;width:6.5px;height:1.0px;background:#55565a;"></div>
<div class="t" style="top:250.0px;line-height:14px;font-size:9.6px;color:#e4e4e4;left:299.0px;transform:scaleX(0.89);transform-origin:0 50%;">Ball Nose Non Metal</div>
<div class="b" style="left:290.0px;top:257.0px;width:6.5px;height:1.0px;background:#55565a;"></div>
<div class="t" style="top:261.9px;line-height:14px;font-size:9.6px;color:#e4e4e4;left:284.8px;transform:scaleX(0.89);transform-origin:0 50%;">Drill</div>
<div class="t" style="top:273.8px;line-height:14px;font-size:9.6px;color:#e4e4e4;left:284.8px;transform:scaleX(0.89);transform-origin:0 50%;">Thread</div>
<svg class="b" style="left:272.9px;top:123.5px;" width="5" height="3.5" viewBox="0 0 5 3.5"><path d="M0 0 H5 L2.500 3.500 Z" fill="#626367"/></svg>
<svg class="b" style="left:272.9px;top:171.5px;" width="5" height="3.5" viewBox="0 0 5 3.5"><path d="M0 0 H5 L2.500 3.500 Z" fill="#626367"/></svg>
<svg class="b" style="left:272.9px;top:231.2px;" width="5" height="3.5" viewBox="0 0 5 3.5"><path d="M0 0 H5 L2.500 3.500 Z" fill="#626367"/></svg>
<div class="b" style="left:275.5px;top:106.0px;width:1.0px;height:175.0px;background:#55565a;"></div>
<div class="b" style="left:275.5px;top:112.8px;width:6.0px;height:1.0px;background:#55565a;"></div>
<div class="b" style="left:275.5px;top:268.9px;width:6.0px;height:1.0px;background:#55565a;"></div>
<div class="b" style="left:275.5px;top:280.8px;width:6.0px;height:1.0px;background:#55565a;"></div>
<div class="b" style="left:290.0px;top:130.0px;width:1.0px;height:31.5px;background:#55565a;"></div>
<div class="b" style="left:290.0px;top:178.0px;width:1.0px;height:43.5px;background:#55565a;"></div>
<div class="b" style="left:290.0px;top:238.0px;width:1.0px;height:19.0px;background:#55565a;"></div>
<div class="b" style="left:272.0px;top:122.0px;width:8.0px;height:6.5px;background:#303134;"></div>
<svg class="b" style="left:272.9px;top:123.5px;" width="5" height="3.5" viewBox="0 0 5 3.5"><path d="M0 0 H5 L2.500 3.500 Z" fill="#626367"/></svg>
<div class="b" style="left:272.0px;top:170.0px;width:8.0px;height:6.5px;background:#303134;"></div>
<svg class="b" style="left:272.9px;top:171.5px;" width="5" height="3.5" viewBox="0 0 5 3.5"><path d="M0 0 H5 L2.500 3.500 Z" fill="#626367"/></svg>
<div class="b" style="left:272.0px;top:229.7px;width:8.0px;height:6.5px;background:#303134;"></div>
<svg class="b" style="left:272.9px;top:231.2px;" width="5" height="3.5" viewBox="0 0 5 3.5"><path d="M0 0 H5 L2.500 3.500 Z" fill="#626367"/></svg>
<div class="b" style="left:254.3px;top:551.0px;width:24.3px;height:23.5px;border:1px solid #4a4b4f;box-sizing:border-box;border-radius:3px;"></div>
<svg class="b" style="left:259.8px;top:556.0px;" width="13" height="13" viewBox="0 0 13 13"><g fill="none" stroke="#b8b8b8" stroke-width="1.1" stroke-linejoin="round" stroke-linecap="round"><path d="M8 12.500 H2 Q0.5 12.500 0.500 11 V2 Q0.500 0.500 2 0.500 H11 Q12.500 0.500 12.500 2 V8"/><path d="M3 4 H10 M3 7 H8"/><path d="M9.500 12 L12.500 9.500 L9.500 9.500 Z" fill="#b8b8b8"/></g></svg>
<div class="b" style="left:285.3px;top:551.0px;width:24.3px;height:23.5px;border:1px solid #4a4b4f;box-sizing:border-box;border-radius:3px;"></div>
<svg class="b" style="left:290.8px;top:556.0px;" width="13" height="13" viewBox="0 0 13 13"><g fill="none" stroke="#b8b8b8" stroke-width="1.1" stroke-linejoin="round" stroke-linecap="round"><path d="M3 2.500 V1.500 Q3 0.500 4 0.500 H11.500 Q12.500 0.500 12.500 1.500 V10 Q12.500 11 11.500 11 H10.500"/><rect x="0.5" y="2.500" width="9.500" height="10" rx="1"/><path d="M2.500 5.500 H8 M2.500 7.500 H8 M2.500 9.500 H8"/></g></svg>
<div class="b" style="left:316.0px;top:551.0px;width:24.3px;height:23.5px;border:1px solid #4a4b4f;box-sizing:border-box;border-radius:3px;"></div>
<svg class="b" style="left:321.5px;top:556.0px;" width="13" height="13" viewBox="0 0 13 13"><g fill="none" stroke="#b8b8b8" stroke-width="1.1" stroke-linejoin="round" stroke-linecap="round"><path d="M1.500 3 H11.500 M4.500 3 V1 H8.500 V3"/><path d="M2.500 3 V11.500 Q2.500 12.500 3.500 12.500 H9.500 Q10.500 12.500 10.500 11.500 V3"/><path d="M5.500 6 V10 M7.500 6 V10"/></g></svg>
<div class="b" style="left:349.5px;top:553.0px;width:1.0px;height:20.0px;background:#3e3f42;"></div>
<div class="b" style="left:357.0px;top:551.0px;width:24.3px;height:23.5px;border:1px solid #4a4b4f;box-sizing:border-box;border-radius:3px;"></div>
<svg class="b" style="left:362.5px;top:556.0px;" width="13" height="13" viewBox="0 0 13 13"><g fill="none" stroke="#b8b8b8" stroke-width="1.1" stroke-linejoin="round" stroke-linecap="round"><path d="M6 1 H2 Q0.5 1 0.500 2.500 V11 Q0.500 12.500 2 12.500 H10.500 Q12 12.500 12 11 V7"/><path d="M6 7 L12.500 0.500 M8.500 0.500 H12.500 V4.500"/></g></svg>
<div class="b" style="left:387.8px;top:551.0px;width:24.3px;height:23.5px;border:1px solid #4a4b4f;box-sizing:border-box;border-radius:3px;"></div>
<svg class="b" style="left:393.3px;top:556.0px;" width="13" height="13" viewBox="0 0 13 13"><g fill="none" stroke="#b8b8b8" stroke-width="1.1" stroke-linejoin="round" stroke-linecap="round"><path d="M6 1 H2 Q0.5 1 0.500 2.500 V11 Q0.500 12.500 2 12.500 H10.500 Q12 12.500 12 11 V7"/><path d="M12 1 L6 7 M6 3 V7 H10"/></g></svg>
<div class="b" style="left:432.3px;top:78.9px;width:48.5px;height:28.3px;border:1px solid #4a4b4f;box-sizing:border-box;border-radius:3.5px;"></div>
<svg class="b" style="left:446.8px;top:83.0px;" width="20" height="20" viewBox="0 0 20 20"><g fill="none" stroke="#d8d8d8" stroke-width="1.5" stroke-linejoin="round" stroke-linecap="round"><path d="M8 2 H2 V18 H17.500 V13"/><path d="M13.500 2 V10 M9.500 6 H17.500"/></g></svg>
<div class="b" style="left:488.0px;top:78.9px;width:48.5px;height:28.3px;border:1px solid #4a4b4f;box-sizing:border-box;border-radius:3.5px;"></div>
<svg class="b" style="left:502.5px;top:83.0px;" width="20" height="20" viewBox="0 0 20 20"><g fill="none" stroke="#d8d8d8" stroke-width="1.5" stroke-linejoin="round" stroke-linecap="round"><path d="M12 4 H1.500 V18 H17 V10"/><path d="M8 13 L9 9.500 L16.500 1.500 L19 3.500 L11.500 12 Z"/></g></svg>
<div class="b" style="left:542.3px;top:78.9px;width:48.5px;height:28.3px;border:1px solid #4a4b4f;box-sizing:border-box;border-radius:3.5px;"></div>
<svg class="b" style="left:556.8px;top:83.0px;" width="20" height="20" viewBox="0 0 20 20"><g fill="none" stroke="#d8d8d8" stroke-width="1.5" stroke-linejoin="round" stroke-linecap="round"><path d="M3 13.500 H2.500 Q1 13.500 1 12 V2.500 Q1 1 2.500 1 H12 Q13.500 1 13.500 2.500 V3"/><rect x="5" y="5" width="13.500" height="13.500" rx="1.5"/><path d="M11.800 8.500 V15 M8.500 11.800 H15"/></g></svg>
<div class="b" style="left:596.8px;top:78.9px;width:48.5px;height:28.3px;border:1px solid #4a4b4f;box-sizing:border-box;border-radius:3.5px;"></div>
<svg class="b" style="left:611.3px;top:83.0px;" width="20" height="20" viewBox="0 0 20 20"><g fill="none" stroke="#d8d8d8" stroke-width="1.5" stroke-linejoin="round" stroke-linecap="round"><path d="M6 5 V2.500 Q6 1 7.500 1 H17.500 Q19 1 19 2.500 V14.500 Q19 16 17.500 16 H15"/><rect x="1" y="5" width="12.500" height="14.500" rx="1.5"/></g></svg>
<svg class="b" style="left:665.8px;top:83.0px;" width="20" height="20" viewBox="0 0 20 20"><g fill="#f4f4f4" stroke="#f4f4f4" stroke-width="1.5" stroke-linejoin="round" stroke-linecap="round"><rect x="6" y="1" width="12.500" height="14.500" rx="1.5"/><rect x="1.500" y="4.500" width="12.500" height="14.500" rx="1.5" stroke="#2b2c2f" stroke-width="1"/></g></svg>
<div class="b" style="left:705.0px;top:78.9px;width:48.5px;height:28.3px;border:1px solid #4a4b4f;box-sizing:border-box;border-radius:3.5px;"></div>
<svg class="b" style="left:719.5px;top:83.0px;" width="20" height="20" viewBox="0 0 20 20"><g fill="none" stroke="#b4b4b4" stroke-width="1.5" stroke-linejoin="round" stroke-linecap="round"><path d="M3 4.500 H17 M7 4.500 V2.500 H13 V4.500"/><path d="M4.500 4.500 L5.500 18 Q5.600 19 6.500 19 H13.500 Q14.400 19 14.500 18 L15.500 4.500"/><path d="M8 8 L8.500 16 M10 8 V16 M12 8 L11.500 16" stroke-width="1"/></g></svg>
<div class="b" style="left:415.0px;top:113.5px;width:452.0px;height:228.0px;border:1px solid #4b4c50;box-sizing:border-box;border-radius:3px;"></div>
<div class="t" style="top:118.0px;line-height:14px;font-size:9.6px;color:#e4e4e4;left:334.0px;width:300px;text-align:center;transform:scaleX(0.89);transform-origin:50% 50%;">Name</div>
<div class="t" style="top:118.0px;line-height:14px;font-size:9.6px;color:#e4e4e4;left:423.0px;width:300px;text-align:center;transform:scaleX(0.89);transform-origin:50% 50%;">Number</div>
<div class="t" style="top:118.0px;line-height:14px;font-size:9.6px;color:#e4e4e4;left:467.0px;width:300px;text-align:center;transform:scaleX(0.89);transform-origin:50% 50%;">Type</div>
<div class="t" style="top:118.0px;line-height:14px;font-size:9.6px;color:#e4e4e4;left:519.5px;width:300px;text-align:center;transform:scaleX(0.89);transform-origin:50% 50%;">Diameter(D)</div>
<div class="t" style="top:118.0px;line-height:14px;font-size:9.6px;color:#e4e4e4;left:576.6px;width:300px;text-align:center;transform:scaleX(0.89);transform-origin:50% 50%;">Angle(A)</div>
<div class="t" style="top:118.0px;line-height:14px;font-size:9.6px;color:#e4e4e4;left:641.0px;width:300px;text-align:center;transform:scaleX(0.89);transform-origin:50% 50%;">Tip Diameter(F)</div>
<div class="b" style="left:830px;top:115px;width:36px;height:20px;overflow:hidden"><div class="t" style="left:8.700px;top:3px;line-height:14px;font-size:9.6px;color:#dedede;transform:scaleX(0.89);transform-origin:0 50%">Half Angle</div></div>
<div class="b" style="left:417.6px;top:176.3px;width:448.4px;height:20.8px;background:#3a77ef;"></div>
<div class="t" style="top:137.2px;line-height:14px;font-size:9.6px;color:#e4e4e4;left:419.6px;transform:scaleX(0.915);transform-origin:0 50%;">3.175*25mm Flat End</div>
<div class="t" style="top:137.2px;line-height:14px;font-size:9.6px;color:#e4e4e4;left:552.3px;transform:scaleX(0.915);transform-origin:0 50%;">1</div>
<div class="t" style="top:137.2px;line-height:14px;font-size:9.6px;color:#e4e4e4;left:597.3px;transform:scaleX(0.915);transform-origin:0 50%;">Flat End</div>
<div class="t" style="top:137.2px;line-height:14px;font-size:9.6px;color:#e4e4e4;left:639.0px;transform:scaleX(0.915);transform-origin:0 50%;">3.175</div>
<div class="t" style="top:137.2px;line-height:14px;font-size:9.6px;color:#e4e4e4;left:703.8px;transform:scaleX(0.915);transform-origin:0 50%;">0</div>
<div class="t" style="top:137.2px;line-height:14px;font-size:9.6px;color:#e4e4e4;left:753.7px;transform:scaleX(0.915);transform-origin:0 50%;">3.175</div>
<div class="t" style="top:137.2px;line-height:14px;font-size:9.6px;color:#e4e4e4;left:831.6px;transform:scaleX(0.915);transform-origin:0 50%;">0</div>
<div class="t" style="top:158.3px;line-height:14px;font-size:9.6px;color:#e4e4e4;left:419.6px;transform:scaleX(0.915);transform-origin:0 50%;">0.2mm*30° Engraving(Metal)</div>
<div class="t" style="top:158.3px;line-height:14px;font-size:9.6px;color:#e4e4e4;left:552.3px;transform:scaleX(0.915);transform-origin:0 50%;">2</div>
<div class="t" style="top:158.3px;line-height:14px;font-size:9.6px;color:#e4e4e4;left:597.3px;transform:scaleX(0.915);transform-origin:0 50%;">Engraving</div>
<div class="t" style="top:158.3px;line-height:14px;font-size:9.6px;color:#e4e4e4;left:639.0px;transform:scaleX(0.915);transform-origin:0 50%;">3.175</div>
<div class="t" style="top:158.3px;line-height:14px;font-size:9.6px;color:#e4e4e4;left:703.8px;transform:scaleX(0.915);transform-origin:0 50%;">0</div>
<div class="t" style="top:158.3px;line-height:14px;font-size:9.6px;color:#e4e4e4;left:753.7px;transform:scaleX(0.915);transform-origin:0 50%;">0.2</div>
<div class="t" style="top:158.3px;line-height:14px;font-size:9.6px;color:#e4e4e4;left:831.6px;transform:scaleX(0.915);transform-origin:0 50%;">15</div>
<div class="t" style="top:179.4px;line-height:14px;font-size:9.6px;color:#cfe0ff;left:419.6px;transform:scaleX(0.915);transform-origin:0 50%;">0.8mm Corn</div>
<div class="t" style="top:179.4px;line-height:14px;font-size:9.6px;color:#cfe0ff;left:552.3px;transform:scaleX(0.915);transform-origin:0 50%;">3</div>
<div class="t" style="top:179.4px;line-height:14px;font-size:9.6px;color:#cfe0ff;left:597.3px;transform:scaleX(0.915);transform-origin:0 50%;">Flat End</div>
<div class="t" style="top:179.4px;line-height:14px;font-size:9.6px;color:#cfe0ff;left:639.0px;transform:scaleX(0.915);transform-origin:0 50%;">0.8</div>
<div class="t" style="top:179.4px;line-height:14px;font-size:9.6px;color:#cfe0ff;left:703.8px;transform:scaleX(0.915);transform-origin:0 50%;">0</div>
<div class="t" style="top:179.4px;line-height:14px;font-size:9.6px;color:#cfe0ff;left:753.7px;transform:scaleX(0.915);transform-origin:0 50%;">0.8</div>
<div class="t" style="top:179.4px;line-height:14px;font-size:9.6px;color:#cfe0ff;left:831.6px;transform:scaleX(0.915);transform-origin:0 50%;">0</div>
<div class="t" style="top:200.6px;line-height:14px;font-size:9.6px;color:#e4e4e4;left:419.6px;transform:scaleX(0.915);transform-origin:0 50%;">3.175*12mm Flat End(Metal)</div>
<div class="t" style="top:200.6px;line-height:14px;font-size:9.6px;color:#e4e4e4;left:552.3px;transform:scaleX(0.915);transform-origin:0 50%;">4</div>
<div class="t" style="top:200.6px;line-height:14px;font-size:9.6px;color:#e4e4e4;left:597.3px;transform:scaleX(0.915);transform-origin:0 50%;">Flat End</div>
<div class="t" style="top:200.6px;line-height:14px;font-size:9.6px;color:#e4e4e4;left:639.0px;transform:scaleX(0.915);transform-origin:0 50%;">3.175</div>
<div class="t" style="top:200.6px;line-height:14px;font-size:9.6px;color:#e4e4e4;left:703.8px;transform:scaleX(0.915);transform-origin:0 50%;">0</div>
<div class="t" style="top:200.6px;line-height:14px;font-size:9.6px;color:#e4e4e4;left:753.7px;transform:scaleX(0.915);transform-origin:0 50%;">3.175</div>
<div class="t" style="top:200.6px;line-height:14px;font-size:9.6px;color:#e4e4e4;left:831.6px;transform:scaleX(0.915);transform-origin:0 50%;">0</div>
<div class="t" style="top:221.7px;line-height:14px;font-size:9.6px;color:#e4e4e4;left:419.6px;transform:scaleX(0.915);transform-origin:0 50%;">0.3mm*30° Solder Mask Removal</div>
<div class="t" style="top:221.7px;line-height:14px;font-size:9.6px;color:#e4e4e4;left:552.3px;transform:scaleX(0.915);transform-origin:0 50%;">5</div>
<div class="t" style="top:221.7px;line-height:14px;font-size:9.6px;color:#e4e4e4;left:597.3px;transform:scaleX(0.915);transform-origin:0 50%;">Engraving</div>
<div class="t" style="top:221.7px;line-height:14px;font-size:9.6px;color:#e4e4e4;left:639.0px;transform:scaleX(0.915);transform-origin:0 50%;">3.175</div>
<div class="t" style="top:221.7px;line-height:14px;font-size:9.6px;color:#e4e4e4;left:703.8px;transform:scaleX(0.915);transform-origin:0 50%;">0</div>
<div class="t" style="top:221.7px;line-height:14px;font-size:9.6px;color:#e4e4e4;left:753.7px;transform:scaleX(0.915);transform-origin:0 50%;">0.3</div>
<div class="t" style="top:221.7px;line-height:14px;font-size:9.6px;color:#e4e4e4;left:831.6px;transform:scaleX(0.915);transform-origin:0 50%;">15</div>
<div class="t" style="top:242.8px;line-height:14px;font-size:9.6px;color:#e4e4e4;left:419.6px;transform:scaleX(0.915);transform-origin:0 50%;">0.1mm*90° Chamfering</div>
<div class="t" style="top:242.8px;line-height:14px;font-size:9.6px;color:#e4e4e4;left:552.3px;transform:scaleX(0.915);transform-origin:0 50%;">6</div>
<div class="t" style="top:242.8px;line-height:14px;font-size:9.6px;color:#e4e4e4;left:597.3px;transform:scaleX(0.915);transform-origin:0 50%;">Engraving</div>
<div class="t" style="top:242.8px;line-height:14px;font-size:9.6px;color:#e4e4e4;left:639.0px;transform:scaleX(0.915);transform-origin:0 50%;">3.175</div>
<div class="t" style="top:242.8px;line-height:14px;font-size:9.6px;color:#e4e4e4;left:703.8px;transform:scaleX(0.915);transform-origin:0 50%;">0</div>
<div class="t" style="top:242.8px;line-height:14px;font-size:9.6px;color:#e4e4e4;left:753.7px;transform:scaleX(0.915);transform-origin:0 50%;">0.1</div>
<div class="t" style="top:242.8px;line-height:14px;font-size:9.6px;color:#e4e4e4;left:831.6px;transform:scaleX(0.915);transform-origin:0 50%;">45</div>
<div class="b" style="left:430.0px;top:332.0px;width:210.0px;height:5.0px;background:#8d8e91;border-radius:2.5px;"></div>
<div class="t" style="top:347.5px;line-height:14px;font-size:9.6px;color:#e4e4e4;left:432.3px;transform:scaleX(0.89);transform-origin:0 50%;">Tool Properties</div>
<div class="b" style="left:415.0px;top:365.0px;width:452.0px;height:210.5px;border:1px solid #4b4c50;box-sizing:border-box;border-radius:3px;"></div>
<div class="t" style="top:370.3px;line-height:14px;font-size:9.6px;color:#e4e4e4;left:330.4px;width:300px;text-align:center;transform:scaleX(0.89);transform-origin:50% 50%;">Material</div>
<div class="t" style="top:370.3px;line-height:14px;font-size:9.6px;color:#e4e4e4;left:420.0px;width:300px;text-align:center;transform:scaleX(0.89);transform-origin:50% 50%;">Spindle Speed</div>
<div class="t" style="top:370.3px;line-height:14px;font-size:9.6px;color:#e4e4e4;left:510.6px;width:300px;text-align:center;transform:scaleX(0.89);transform-origin:50% 50%;">Step Over</div>
<div class="t" style="top:370.3px;line-height:14px;font-size:9.6px;color:#e4e4e4;left:600.6px;width:300px;text-align:center;transform:scaleX(0.89);transform-origin:50% 50%;">Step Down</div>
<div class="t" style="top:370.3px;line-height:14px;font-size:9.6px;color:#e4e4e4;left:561.5px;width:300px;text-align:right;transform:scaleX(0.89);transform-origin:100% 50%;">Feed Rate</div>
<div class="b" style="left:434.5px;top:386.0px;width:431.5px;height:20.3px;background:#3a77ef;"></div>
<div class="t" style="top:389.5px;line-height:14px;font-size:9.6px;color:#f0f0f0;font-weight:bold;left:272.0px;width:300px;text-align:center;transform:scaleX(0.89);transform-origin:50% 50%;">1</div>
<div class="t" style="top:410.5px;line-height:14px;font-size:9.6px;color:#e4e4e4;left:272.0px;width:300px;text-align:center;transform:scaleX(0.89);transform-origin:50% 50%;">2</div>
<div class="t" style="top:389.0px;line-height:14px;font-size:9.6px;color:#cfe0ff;left:437.0px;transform:scaleX(0.915);transform-origin:0 50%;">PCB</div>
<div class="t" style="top:389.0px;line-height:14px;font-size:9.6px;color:#cfe0ff;left:527.0px;transform:scaleX(0.915);transform-origin:0 50%;">12000</div>
<div class="t" style="top:389.0px;line-height:14px;font-size:9.6px;color:#cfe0ff;left:617.6px;transform:scaleX(0.915);transform-origin:0 50%;">60</div>
<div class="t" style="top:389.0px;line-height:14px;font-size:9.6px;color:#cfe0ff;left:707.6px;transform:scaleX(0.915);transform-origin:0 50%;">0.3</div>
<div class="t" style="top:389.0px;line-height:14px;font-size:9.6px;color:#cfe0ff;left:798.0px;transform:scaleX(0.915);transform-origin:0 50%;">500</div>
<div class="t" style="top:410.0px;line-height:14px;font-size:9.6px;color:#e4e4e4;left:437.0px;transform:scaleX(0.915);transform-origin:0 50%;">Carbon Fiber</div>
<div class="t" style="top:410.0px;line-height:14px;font-size:9.6px;color:#e4e4e4;left:527.0px;transform:scaleX(0.915);transform-origin:0 50%;">12000</div>
<div class="t" style="top:410.0px;line-height:14px;font-size:9.6px;color:#e4e4e4;left:617.6px;transform:scaleX(0.915);transform-origin:0 50%;">60</div>
<div class="t" style="top:410.0px;line-height:14px;font-size:9.6px;color:#e4e4e4;left:707.6px;transform:scaleX(0.915);transform-origin:0 50%;">0.3</div>
<div class="t" style="top:410.0px;line-height:14px;font-size:9.6px;color:#e4e4e4;left:798.0px;transform:scaleX(0.915);transform-origin:0 50%;">500</div>
<div class="b" style="left:430.0px;top:565.0px;width:240.0px;height:5.0px;background:#8d8e91;border-radius:2.5px;"></div>
<div class="t" style="top:77.0px;line-height:14px;font-size:9.6px;color:#e4e4e4;left:874.0px;transform:scaleX(0.89);transform-origin:0 50%;">Tool Information</div>
<div class="b" style="left:914.8px;top:92.5px;width:106.3px;height:155.7px;background:#ffffff;"></div>
<svg class="b" style="left:914.0px;top:92.5px;" width="107" height="155.5" viewBox="0 0 107 155.5">
<defs>
<linearGradient id="sv" x1="0" y1="0" x2="1" y2="0"><stop offset="0" stop-color="#b4b4b4"/><stop offset="0.25" stop-color="#d6d6d6"/><stop offset="0.5" stop-color="#f4f4f4"/><stop offset="0.75" stop-color="#d2d2d2"/><stop offset="1" stop-color="#ababab"/></linearGradient>
<linearGradient id="sv2" x1="0" y1="0" x2="1" y2="0"><stop offset="0" stop-color="#c4c4c4"/><stop offset="0.3" stop-color="#e4e4e4"/><stop offset="0.55" stop-color="#fafafa"/><stop offset="0.8" stop-color="#dcdcdc"/><stop offset="1" stop-color="#bcbcbc"/></linearGradient>
</defs>
<rect x="33.200" y="31.700" width="40.800" height="18" rx="1.5" fill="url(#sv)"/>
<rect x="35.500" y="49" width="36.900" height="74" fill="url(#sv2)"/>
<path d="M35.500 122 H72.400 V146 Q66 150 60 147.500 Q52 151 46 147.500 Q40 150 35.500 146 Z" fill="#cfcfcf"/>
<path d="M36 124 L50 149 M44 122 L66 148 M56 122 L72 140" stroke="#f4f4f4" stroke-width="3.200" fill="none"/>
<path d="M40 148 L58 122 M62 147 L72 128" stroke="#aeaeae" stroke-width="1.400" fill="none"/>
<g stroke="#262626" stroke-width="1.05" fill="none"><path d="M33.500 14 V33 M73.700 14 V47 M35 23 H72.500"/></g>
<path d="M33.800 23 L39 21.300 V24.700 Z M73.400 23 L68.200 21.300 V24.700 Z" fill="#3a3a3a"/>
<text x="54" y="16" font-family="Liberation Sans, sans-serif" font-size="12.5" fill="#222" stroke="#222" stroke-width="0.35" text-anchor="middle">D</text>
</svg>
<div class="b" style="left:871.4px;top:252.8px;width:193.0px;height:322.4px;border:1px solid #4b4c50;box-sizing:border-box;border-radius:3px;"></div>
<div class="t" style="top:259.2px;line-height:14px;font-size:9.6px;color:#e4e4e4;left:876.4px;transform:scaleX(0.89);transform-origin:0 50%;">Name</div>
<div class="t" style="top:257.9px;line-height:14px;font-size:9.6px;color:#e4e4e4;left:938.9px;transform:scaleX(0.89);transform-origin:0 50%;">0.8mm Corn</div>
<div class="t" style="top:280.4px;line-height:14px;font-size:9.6px;color:#e4e4e4;left:876.4px;transform:scaleX(0.89);transform-origin:0 50%;">Number</div>
<div class="t" style="top:279.1px;line-height:14px;font-size:9.6px;color:#e4e4e4;left:938.9px;transform:scaleX(0.89);transform-origin:0 50%;">3</div>
<div class="t" style="top:301.6px;line-height:14px;font-size:9.6px;color:#e4e4e4;left:876.4px;transform:scaleX(0.89);transform-origin:0 50%;">Type</div>
<div class="t" style="top:300.3px;line-height:14px;font-size:9.6px;color:#e4e4e4;left:938.9px;transform:scaleX(0.89);transform-origin:0 50%;">Flat End</div>
<div class="t" style="top:322.8px;line-height:14px;font-size:9.6px;color:#e4e4e4;left:876.4px;transform:scaleX(0.89);transform-origin:0 50%;">Diameter(D)</div>
<div class="t" style="top:321.5px;line-height:14px;font-size:9.6px;color:#e4e4e4;left:938.9px;transform:scaleX(0.89);transform-origin:0 50%;">0.8</div>
<div class="t" style="top:344.0px;line-height:14px;font-size:9.6px;color:#e4e4e4;left:876.4px;transform:scaleX(0.89);transform-origin:0 50%;">Angle</div>
<div class="t" style="top:342.7px;line-height:14px;font-size:9.6px;color:#e4e4e4;left:938.9px;transform:scaleX(0.89);transform-origin:0 50%;">0</div>
<div class="b" style="left:911.0px;top:580.0px;width:74.5px;height:25.5px;background:#3f4044;border:1px solid #3a66c8;box-sizing:border-box;border-radius:3px;"></div>
<div class="t" style="top:586.0px;line-height:14px;font-size:9.6px;color:#e4e4e4;left:798.0px;width:300px;text-align:center;transform:scaleX(0.89);transform-origin:50% 50%;">Choose</div>
<div class="b" style="left:990.0px;top:580.0px;width:73.5px;height:25.5px;background:#3f4043;border-radius:3px;"></div>
<div class="t" style="top:586.0px;line-height:14px;font-size:9.6px;color:#e4e4e4;left:876.5px;width:300px;text-align:center;transform:scaleX(0.89);transform-origin:50% 50%;">Close</div>
<svg class="b" style="left:0.0px;top:0.0px;pointer-events:none;" width="1230" height="672" viewBox="0 0 1230 672"><polygon points="898.9,190.8 945.7,143.7 945.7,167.3 1063.4,167.3 1063.4,214.6 945.7,214.6 945.7,238.6" fill="#e93323" stroke="#2c4a8c" stroke-width="1.3" stroke-linejoin="miter"/></svg>
<svg class="b" style="left:0.0px;top:0.0px;pointer-events:none;" width="1230" height="672" viewBox="0 0 1230 672"><polygon points="915,413.5 961,367 961,391 1077.5,391 1077.5,434.5 961,434.5 961,460" fill="#e93323" stroke="#2c4a8c" stroke-width="1.3" stroke-linejoin="miter"/></svg>
</div></body></html>
